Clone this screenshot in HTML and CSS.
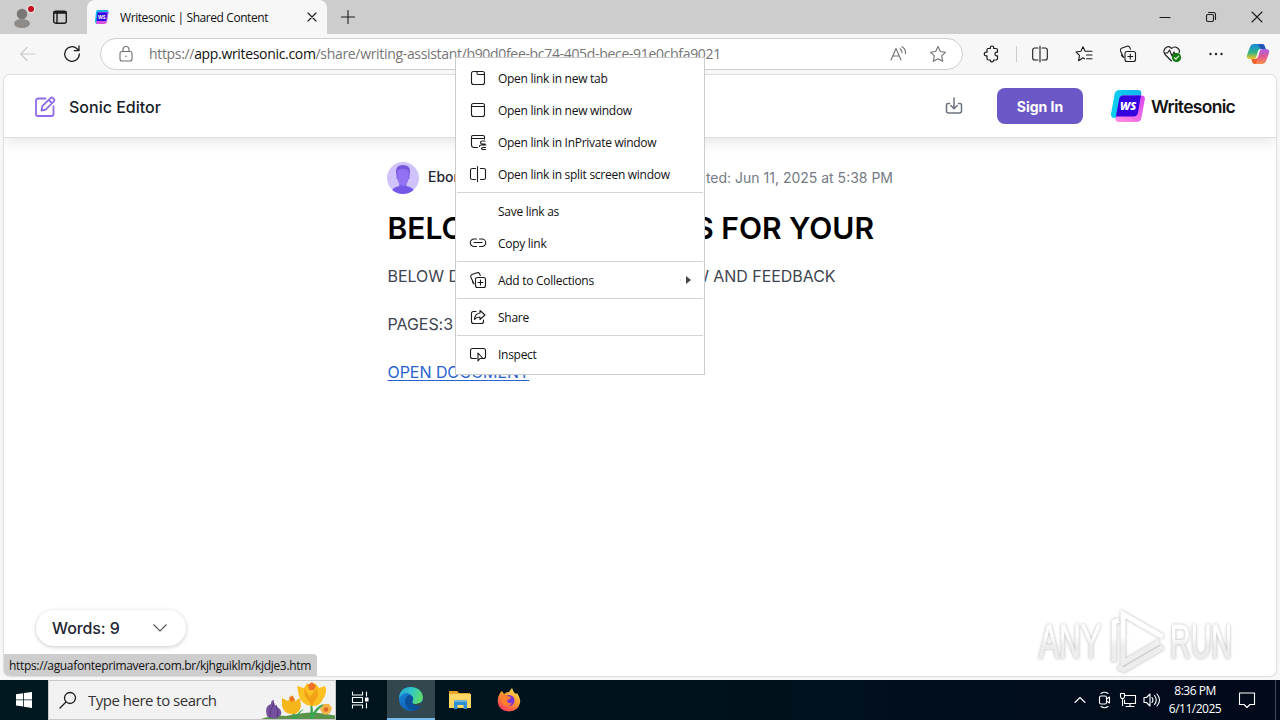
FILE: index.html
```html
<!DOCTYPE html>
<html lang="en">
<head>
<meta charset="utf-8">
<title>Writesonic | Shared Content</title>
<link rel="stylesheet" href="styles.css">
</head>
<body>
<div class="tabstrip">
  <svg class="profile" width="28" height="28" viewBox="0 0 28 28"><circle cx="14" cy="11" r="5.3" fill="#7b7774"/><ellipse cx="14" cy="20.500" rx="8" ry="4.500" fill="#8e8a87"/><circle cx="23" cy="6" r="4.600" fill="#dcdcdc"/><circle cx="23" cy="6" r="3" fill="#c50f1f"/></svg>
  <svg class="tabmenu ico" width="16" height="16" viewBox="0 0 16 16"><rect x="1.700" y="2.200" width="12.600" height="12" rx="2"/><path d="M2 4h12M2 3h12M5 4v10"/></svg>
  <div class="tab">
    <svg width="16" height="16" viewBox="0 0 16 16"><path d="M4 1h9q2 0 1.500 2L13 12q-.5 2-2.500 2H2q-1.500 0-1-2L2 3q.3-2 2-2z" fill="#16b7e8"/><path d="M5 3h9.500l-1.600 9.500q-.5 2.500-2.500 2.500H2z" fill="#d355df"/><path d="M3.500 3.500h10L12 12H2.500z" fill="#2c0be2"/><text x="4" y="9.800" class="wsmini">WS</text></svg>
    <span class="tabtitle">Writesonic | Shared Content</span>
    <svg class="ico" width="12" height="12" viewBox="0 0 12 12"><path d="M2 2l8 8M10 2l-8 8"/></svg>
  </div>
  <svg class="ico plus" width="14" height="14" viewBox="0 0 14 14"><path d="M7 .5v13M.5 7h13"/></svg>
  <div class="wincontrols">
    <svg class="ico" width="12" height="12" viewBox="0 0 12 12"><path d="M1 6.500h10"/></svg>
    <svg class="ico" width="12" height="12" viewBox="0 0 12 12"><rect x="1.500" y="3.500" width="7" height="7" rx="1.500"/><path d="M3.500 1.500h5q2 0 2 2v5"/></svg>
    <svg class="ico" width="12" height="12" viewBox="0 0 12 12"><path d="M1 1l10 10M11 1L1 11"/></svg>
  </div>
</div>

<div class="toolbar">
  <svg class="ico back" width="16" height="16" viewBox="0 0 16 16"><path d="M15 8H1M7 1.500L.8 8 7 14.500"/></svg>
  <svg class="ico reload" width="18" height="18" viewBox="0 0 18 18"><path d="M16.300 9A7.300 7.300 0 1 1 14 3.700L16 5.500M16 1v4.700h-4.700" stroke-width="1.300"/></svg>
  <div class="omnibox">
    <svg class="ico grey" width="14" height="16" viewBox="0 0 14 16"><rect x="1" y="5.500" width="12" height="9.500" rx="2"/><path d="M4 5.500V3.500a3 3 0 0 1 6 0v2"/><circle cx="7" cy="10.300" r=".8" class="dot"/></svg>
    <span class="url">https://<b>app.writesonic.com</b>/share/writing-assistant/b90d0fee-bc74-405d-bece-91e0cbfa9021</span>
    <svg class="ico grey" width="18" height="16" viewBox="0 0 18 16"><path d="M1 14L6 2.500 11 14M2.700 10h6.600M10 2.800q2 1.200 2 4M12 .7q4 2.300 3.500 7"/></svg>
    <svg class="ico grey star" width="18" height="18" viewBox="0 0 18 18"><path d="M9 1.500l2.300 5 5.300.7-3.900 3.700 1 5.400L9 13.700l-4.700 2.600 1-5.400L1.400 7.200l5.300-.7z"/></svg>
  </div>
  <div class="tools">
    <svg class="ico" width="18" height="18" viewBox="0 0 18 18"><path d="M5 3.500h2.300q-.3-2.500 1.700-2.500t1.700 2.500H13q1.500 0 1.500 1.500v2.200q-2.500-.4-2.500 1.800t2.500 1.800v2.700q0 1.500-1.500 1.500h-2.300q0 2-1.700 2t-1.700-2H5.500q-1.500 0-1.500-1.500v-2.700q-2.700.3-2.700-1.800T4 7.200V5q0-1.500 1-1.500z" stroke-width="1.200"/></svg>
    <i class="divider"></i>
    <svg class="ico" width="18" height="18" viewBox="0 0 18 18"><path d="M7 3H4Q1.700 3 1.700 5v8q0 2 2.300 2h3M11 3h3q2.300 0 2.300 2v8q0 2-2.300 2h-3M9 1v16"/></svg>
    <svg class="ico" width="18" height="18" viewBox="0 0 18 18"><path d="M9.500 13.800L8 12.800l-4.400 2.900.9-5.400L1 7l4.900-.7L8 1.700l2.100 4.600H17M11.500 10h5.500M11.500 13.800h5.500"/></svg>
    <svg class="ico" width="18" height="18" viewBox="0 0 18 18"><rect x="6" y="6.500" width="10.500" height="10" rx="2"/><path d="M11.300 9v5M8.800 11.500h5M4.500 12.500L1.500 6Q1 4 2.500 3.300L8 1.300q2-.6 3 1.500l.5 1.500M5 12q-2 0-2.500-2"/></svg>
    <svg class="ico" width="18" height="18" viewBox="0 0 18 18"><path d="M8.500 16L2 9.500Q-.5 6 2.500 3t6 .5Q11.500.8 14.500 3t1.500 5M1.500 8h3l2-3L9 11l2-4 1 2h2.500"/><circle cx="13.500" cy="12.500" r="4.600" fill="#107c10" stroke="none"/><path d="M11.300 12.600l1.600 1.500 2.700-3" stroke="#fff"/></svg>
    <svg class="dots" width="18" height="18" viewBox="0 0 18 18"><circle cx="3.500" cy="9" r="1.200"/><circle cx="9" cy="9" r="1.200"/><circle cx="14.500" cy="9" r="1.200"/></svg>
  </div>
  <svg class="copilot" width="24" height="22" viewBox="0 0 24 22"><defs><linearGradient id="cp1" x1="0" y1="0" x2="0" y2="1"><stop offset="0" stop-color="#1687e0"/><stop offset=".55" stop-color="#2fb48a"/><stop offset="1" stop-color="#f2c320"/></linearGradient><linearGradient id="cp2" x1="0" y1="0" x2="0" y2="1"><stop offset="0" stop-color="#a763e8"/><stop offset=".5" stop-color="#e05795"/><stop offset="1" stop-color="#fb9148"/></linearGradient></defs><path d="M8 1h8q2 0 2.700 2l.9 3h-5q-2 0-2.600 2l-1.700 6q-.6 2-2.500 2H4Q0 16 1 12L4 4Q5 1 8 1z" fill="url(#cp1)"/><path d="M16 21H9q-2 0-2.700-2L5.500 16h4q2 0 2.600-2l1.700-6q.5-2 2.400-2H20q4 0 3 4l-3 8q-1 3-4 3z" fill="url(#cp2)"/><path d="M12 1h4q2 0 2.700 2l.9 3h-5z" fill="#2455b5"/><path d="M5.500 16h4q2 0 2.600-2l.9-3-3 10H9q-2 0-2.700-2z" fill="#f0622f"/></svg>
</div>

<div class="page">
  <header class="appbar">
    <svg class="edit" width="22" height="22" viewBox="0 0 22 22"><path d="M11.500 2.500h-7q-2.500 0-2.500 2V18q0 2 2 2h13.500q2 0 2-2v-7.500"/><path d="M7.500 14.500l.8-4.300L16.800 1.800q1-.8 2 .2l1.200 1.200q1 1 .1 2L11.700 13.600zM14.800 4l3 3"/></svg>
    <span class="appname">Sonic Editor</span>
    <svg class="download" width="18" height="18" viewBox="0 0 18 18"><path d="M4.500 6.500H3q-1.500 0-1.500 1.500v6q0 2 2 2h11q2 0 2-2V8q0-1.500-1.500-1.500h-1.500M9 1v10.500M5.800 8.500L9 11.700l3.200-3.200"/></svg>
    <button class="signin">Sign In</button>
    <div class="brand">
      <svg width="36" height="33" viewBox="0 0 36 33"><defs><linearGradient id="bl" x1="0" y1="0" x2="1" y2="0"><stop offset="0" stop-color="#0bd0ee"/><stop offset="1" stop-color="#12b5ef"/></linearGradient><linearGradient id="pk" x1="0" y1="1" x2="1" y2="0"><stop offset="0" stop-color="#ff8ee0"/><stop offset="1" stop-color="#d945ef"/></linearGradient></defs><path d="M9 0h18q4 0 3.300 4L26.500 24q-.6 4-4.500 4H4q-4.500 0-4-4L3.600 4Q4.500 0 9 0z" fill="url(#bl)"/><path d="M11 5.500h19.500q4 0 3.300 4l-3.400 18.500q-.8 4-4.800 4H8q-4 0-3.500-4z" fill="url(#pk)"/><path d="M12 5.500h18L27 22.500q-.6 4-4.500 4H4.800L8.200 9q.5-3.500 3.800-3.500z" fill="#3404df"/><text x="9" y="19.500" class="wslogo">WS</text></svg>
      <span class="brandname">Writesonic</span>
    </div>
  </header>
  <main class="article">
    <div class="byline">
      <svg width="32" height="32" viewBox="0 0 32 32"><circle cx="16" cy="16" r="16" fill="#d0c3fb"/><path d="M5.300 28q1-2.500 7-4v-3h7v3q6.200 1.500 7.300 4A16 16 0 0 1 5.300 28z" fill="#7658e8"/><path d="M9 9q0-6 7-6t7 6l-.8 8h-1.500Q20 22 16 22.300 12 22 10.500 17H9.800z" fill="#7657dc"/><path d="M10.500 9q1-2 5.500-2t5.500 2v8q-1 6-5.500 7-4.500-1-5.500-7z" fill="#9272f3"/></svg>
      <span class="author">Ebon</span>
      <span class="date">Updated: Jun 11, 2025 at 5:38 PM</span>
    </div>
    <h1><span>BELOW</span><span>S FOR YOUR</span></h1>
    <p class="lead"><span>BELOW DO</span><span>REVIEW AND FEEDBACK</span></p>
    <p>PAGES:3</p>
    <p><a>OPEN DOCUMENT</a></p>
  </main>
  <div class="bottom">
    <div class="words">Words: 9<svg width="16" height="10" viewBox="0 0 16 10"><path d="M1.500 1.500L8 8l6.500-6.500"/></svg></div>
    <svg class="watermark" width="204" height="68" viewBox="0 0 204 68">
      <defs><linearGradient id="wg" gradientUnits="userSpaceOnUse" x1="0" y1="0" x2="0" y2="68"><stop offset=".45" stop-color="#fff"/><stop offset=".6" stop-color="#ededed"/></linearGradient></defs>
      <g class="wm"><text x="6" y="53" textLength="62" lengthAdjust="spacingAndGlyphs">ANY</text><text x="137" y="53" textLength="62" lengthAdjust="spacingAndGlyphs">RUN</text>
      <path d="M126 37L90 58V9L130 32M81 57V17L86 15M85 62L91 65 130 42"/></g>
    </svg>
  </div>
  <div class="status">https://aguafonteprimavera.com.br/kjhguiklm/kjdje3.htm</div>
</div>

<div class="taskbar">
  <div class="start"><svg width="16" height="16" viewBox="0 0 16 16"><path d="M0 2.200L7.200 1.200V7.500H0zM8 1.100L16 0v7.500H8zM0 8.300h7.200v6.300L0 13.600zM8 8.300h8V16L8 14.800z" fill="#fff"/></svg></div>
  <div class="search">
    <svg class="ico" width="18" height="18" viewBox="0 0 18 18"><circle cx="11" cy="7" r="5.500" stroke-width="1.300"/><path d="M7 11l-6 6" stroke-width="1.300"/></svg>
    <span>Type here to search</span>
    <svg class="flowers" width="80" height="38" viewBox="-2 0 80 38"><path d="M0 39q14-6 28-4 25-6 40-2l12 2v5H0z" fill="#5b934d"/><path d="M35 40q0-9-2-15 4 5 4 11 5-7 9-8-8 7-8 12zM52 40q1-15 0-22 3 6 3 14 5-9 13-9-13 8-13 17z" fill="#39a553"/><path d="M9 35q-3-10 4-12 0-4 3-4-1 3 2 6 8 5 4 10-6 5-13 0z" fill="#74519c"/><path d="M16 22q-5 8-4 14M18 24q3 6 1 12" stroke="#54347f" fill="none"/><path d="M24 17l6 3 4-6 3 6 5-3 1 8q-2 9-9 8-8 0-10-8z" fill="#f4b61b"/><path d="M39 5l7 2 3-5 4 3 4-3 4 5 6-2q3 6-2 13-3 8-12 7-9-1-12-10z" fill="#fbc022"/><path d="M46 7l6 9 7-9 1 8-6 10-7-10z" fill="#f2a016"/><path d="M50 4l4-3 4 4-2 4h-5zM31 16l4-1 2 4-4 2z" fill="#ed7228"/><path d="M64 32l-2-4 4-5h5l3 4-2 5-4 2z" fill="#f6b246"/><circle cx="68" cy="28.500" r="2.300" fill="#dd6928"/></svg>
  </div>
  <div class="cell"><svg class="ico light" width="18" height="18" viewBox="0 0 18 18"><path d="M1.500 1v3h10V1M1.500 17v-3h10v3M1.500 6.500h10v5h-10zM15.500 1v4M15.500 12v5"/><rect x="14.500" y="7" width="2.500" height="3" fill="#fff"/></svg></div>
  <div class="cell active"><svg width="26" height="26" viewBox="0 0 26 26"><defs><linearGradient id="ed1" x1="0" y1="0" x2="1" y2=".3"><stop offset="0" stop-color="#219fd6"/><stop offset=".55" stop-color="#32c7c6"/><stop offset="1" stop-color="#5bdc70"/></linearGradient><linearGradient id="ed2" x1="0" y1="0" x2="1" y2="1"><stop offset="0" stop-color="#1b8ce0"/><stop offset="1" stop-color="#0b4c9c"/></linearGradient></defs><circle cx="13" cy="13" r="12" fill="url(#ed2)"/><path d="M1 12Q2 1 13 1q10 0 12 10 0 7-7 7-4 0-4-2 3-4-1-7-6-5-12 3z" fill="url(#ed1)"/><path d="M14 16q3-5-2-7-5 1-5 7 1 7 8 8 5 0 8-4-7 1-9-4z" fill="#0c4f9c"/><path d="M14 16q0 2 4 2 4 0 7-3l-2 5q-7 1-9-4z" fill="#32474e"/></svg></div>
  <div class="cell"><svg width="24" height="20" viewBox="0 0 24 20"><path d="M1 1h8l2 2h11v4H1z" fill="#e7a52a"/><path d="M1 4h22v14H1z" fill="#ffd764"/><path d="M6 10.500h13V19h-3.500v-4h-6v4H6z" fill="#2f8fd5"/><path d="M6 10.500h13V12H6z" fill="#63b2e5"/></svg></div>
  <div class="cell"><svg width="24" height="24" viewBox="0 0 24 24"><defs><linearGradient id="fx" x1=".8" y1="0" x2=".2" y2="1"><stop offset="0" stop-color="#ffe84a"/><stop offset=".5" stop-color="#ff9130"/><stop offset="1" stop-color="#ff3264"/></linearGradient></defs><path d="M3 5l2-2 2 3q2-2 5-2l3-4q1 4 4 6l1-1q4 6 3 10-2 8-11 8.500Q2 23 .7 14 .5 9 3 5z" fill="url(#fx)"/><circle cx="12" cy="12.500" r="5.500" fill="#7b35d4"/><path d="M4 8q4-3 6 0l4 1q-1 3-4 3 0 4 5 3-3 5-8 2-4-3-3-9z" fill="#ff8130"/></svg></div>
  <div class="tray">
    <svg class="ico light" width="12" height="8" viewBox="0 0 12 8"><path d="M1 6.500l5-5 5 5"/></svg>
    <svg class="ico light" width="14" height="18" viewBox="0 0 14 18"><rect x="1.500" y="5" width="7" height="8" rx="1.500"/><path d="M8.500 8l3-2v6l-3-2M3 2.500q3.500-2.500 7 0M3 15.500q3.500 2.500 7 0"/></svg>
    <svg class="ico light" width="18" height="16" viewBox="0 0 18 16"><path d="M6 3.500h10.500v8H5.500V8M1.500 1.500h4V5l-1 1.500h-2L1.500 5zM3.500 6.500v7M11 11.500v3M7 14.500h8"/></svg>
    <svg class="ico light" width="18" height="16" viewBox="0 0 18 16"><path d="M1 5.500h2.500L7 2v12l-3.500-3.500H1zM9 5.500q2 2.500 0 5M11.500 3.500q3.500 4.500 0 9M14 2q5 6 0 12"/></svg>
    <div class="clock"><span>8:36 PM</span><span class="day">6/11/2025</span></div>
    <svg class="ico light" width="18" height="18" viewBox="0 0 18 18"><path d="M1.500 2h15v11.500H12L9 16.500l-3-3H1.500z"/></svg>
  </div>
</div>

<div class="menu">
  <div class="item"><svg class="ico" width="16" height="16" viewBox="0 0 16 16"><rect x="1.500" y="1.500" width="13" height="13" rx="2"/><path d="M7 2v1q0 1.500 1.500 1.500h6"/></svg><span>Open link in new tab</span></div>
  <div class="item"><svg class="ico" width="16" height="16" viewBox="0 0 16 16"><rect x="1.500" y="1.500" width="13" height="13" rx="2"/><path d="M1.500 4.500h13"/></svg><span>Open link in new window</span></div>
  <div class="item"><svg class="ico" width="16" height="16" viewBox="0 0 16 16"><path d="M7.500 13.500H4q-2.500 0-2.500-2.500V3q0-1.500 1.500-1.500h10q1.500 0 1.500 1.500v2M1.500 4.500h13M15 7h-2.500q-2 0-2 1.500t2 1.500H15M9.500 12.500q0-1.500 1.500-1.500h5M15.500 13.500h-2.500q-1.500 0-1.500 1t1.500 1h2.500"/></svg><span>Open link in InPrivate window</span></div>
  <div class="item"><svg class="ico" width="16" height="16" viewBox="0 0 16 16"><path d="M5.500 2.500h-3Q.5 2.500.5 4v8q0 1.500 2 1.500h3M10.500 2.500h3q2 0 2 1.500v8q0 1.500-2 1.500h-3M7.500 .5v15"/></svg><span>Open link in split screen window</span></div>
  <hr>
  <div class="item"><i class="blank"></i><span>Save link as</span></div>
  <div class="item"><svg class="ico" width="16" height="16" viewBox="0 0 16 16"><path d="M6.500 4H4a3.700 3.700 0 0 0 0 7.500h2.500M9.500 4H12a3.700 3.700 0 0 1 0 7.500H9.500M4 7.500h8"/></svg><span>Copy link</span></div>
  <hr>
  <div class="item"><svg class="ico" width="16" height="16" viewBox="0 0 16 16"><rect x="5.500" y="5.500" width="10" height="10" rx="2"/><path d="M10.500 8v5M8 10.500h5M4 12L.8 5Q.3 3.300 2 2.500L7 .8q1.700-.5 2.500 1l.8 1.700M4 12q-1.500-.5-1.500-3"/></svg><span>Add to Collections</span><i class="arrow"></i></div>
  <hr>
  <div class="item"><svg class="ico" width="16" height="16" viewBox="0 0 16 16"><path d="M6 2.500H3.500q-2 0-2 2v8q0 2 2 2h8q2 0 2-2V11M10 1.500L15 6l-5 4.500V8q-3.500 0-5.500 2.500Q5 4.500 10 4z"/></svg><span>Share</span></div>
  <hr>
  <div class="item"><svg class="ico" width="16" height="16" viewBox="0 0 16 16"><path d="M6.500 12.500h-4q-2 0-2-2v-6q0-2 2-2h11q2 0 2 2v6q0 2-2 2M8 7v8l2-2.500h3z"/></svg><span>Inspect</span></div>
</div>
</body>
</html>
```
FILE: styles.css
```css
* { box-sizing: border-box; }
body {
  margin: 0; width: 1280px; height: 720px; overflow: hidden; position: relative;
  display: flex; flex-direction: column; background: #f7f7f7;
  font-family: "Open Sans", "Noto Sans", sans-serif; font-size: 12px; color: #111;
}
svg { flex: none; display: block; overflow: visible; }
span { white-space: nowrap; }
.ico { fill: none; stroke: #1b1b1b; stroke-width: 1.1; stroke-linecap: round; stroke-linejoin: round; }
.grey { stroke: #707070; }
.light { stroke: #fff; }
.dot { fill: #707070; stroke: none; }

.tabstrip { height: 34px; flex: none; background: #cdcdcd; display: flex; align-items: center; padding-left: 8px; }
.tabmenu { margin-left: 16px; stroke-width: 1.4; }
.tab { margin-left: 19px; width: 240px; height: 34px; background: #f7f7f7; border-radius: 8px 8px 0 0; display: flex; align-items: center; padding: 0 9px 0 7px; }
.tabtitle { flex: 1; margin-left: 10px; letter-spacing: -.42px; }
.plus { margin-left: 14px; }
.wincontrols { margin-left: auto; display: flex; gap: 34px; padding-right: 17px; }
.wsmini { font: bold 5px "Open Sans", sans-serif; fill: #fff; }

.toolbar { height: 40px; flex: none; display: flex; align-items: center; padding: 0 10px 0 20px; }
.back { stroke: #c9c9c9; }
.reload { margin-left: 27px; }
.omnibox { margin-left: 19px; width: 863px; height: 32px; border: 1px solid #cfcfcf; border-radius: 16px; background: #fff; display: flex; align-items: center; padding: 0 15px 0 18px; }
.url { margin-left: 16px; flex: 1; font-size: 14px; line-height: 18px; padding-bottom: 1px; color: #757575; letter-spacing: -.325px; }
.url b { font-weight: 400; color: #111; }
.star { margin-left: 21px; }
.tools { margin-left: 20px; display: flex; align-items: center; gap: 26px; }
.divider { width: 1px; height: 16px; background: #ccc; margin: 0 -11px; }
.tools .divider + svg { margin-left: -1px; }
.dots { fill: #222; }
.copilot { margin-left: auto; }

.page { margin: 1px 4px 4px; flex: 1; background: #fff; border-radius: 6px; box-shadow: 0 0 2px rgba(0,0,0,.35); display: flex; flex-direction: column; overflow: hidden; font-family: Inter, sans-serif; }
.appbar { height: 63px; flex: none; display: flex; align-items: center; padding: 0 41px 0 30px; background: #fff; border-bottom: 1px solid #ddd; box-shadow: 0 3px 15px rgba(0,0,0,.11); }
.edit { margin-top: 2px; fill: none; stroke: #8f6ce6; stroke-width: 1.8; stroke-linejoin: round; stroke-linecap: round; }
.appname { margin-left: 13px; padding-top: 2px; font-size: 16px; font-weight: 500; color: #161d29; flex: 1; }
.download { fill: none; stroke: #6b7280; stroke-width: 1.5; stroke-linecap: round; stroke-linejoin: round; }
.signin { margin-left: 34px; width: 86px; height: 36px; border: 0; border-radius: 8px; background: #6b57c6; color: #fff; font: 700 14px Inter, sans-serif; padding: 0; }
.brand { margin-left: 28px; display: flex; align-items: center; width: 124px; }
.brandname { margin-left: 4px; padding-top: 1px; font: 600 17.5px Inter, sans-serif; letter-spacing: -.7px; color: #151515; }
.wslogo { font: italic 800 11px "Open Sans", sans-serif; fill: #fff; }

.article { width: 506px; margin: 24px 0 0 383px; display: flex; flex-direction: column; color: #40444f; font-size: 16px; }
.byline { display: flex; height: 32px; align-items: center; font-size: 14px; }
.author { margin: 0 0 4px 9px; font-weight: 500; color: #1d2330; }
.date { margin: 0 0 1px auto; color: #747b84; font-size: 14px; }
h1 { margin: 16px 0 0 .5px; width: 486.5px; height: 36px; display: flex; justify-content: space-between; font-size: 30px; line-height: 36px; font-weight: 600; color: #000; }
p { margin: 18px 0 6px .5px; line-height: 24px; height: 24px; letter-spacing: -.05px; }
.lead { width: 448px; display: flex; justify-content: space-between; }
a { color: #2a62cf; text-decoration: underline; text-underline-offset: 2px; }

.bottom { margin-top: auto; display: flex; justify-content: space-between; align-items: flex-end; padding: 0 39px 3px 32px; }
.words { width: 150px; height: 36px; margin-bottom: 5px; border-radius: 18px; background: #fff; box-shadow: 0 1px 4px rgba(0,0,0,.22); display: flex; align-items: center; justify-content: space-between; padding: 0 18px 0 16px; font-size: 16px; font-weight: 500; color: #1d2432; letter-spacing: -.1px; }
.words svg { fill: none; stroke: #555; stroke-width: 1.1; }
.watermark { margin-bottom: -22px; filter: drop-shadow(0 0 1.5px rgba(0,0,0,.3)); }
.wm { fill: url(#wg); font: 400 48px "Liberation Sans", sans-serif; stroke: url(#wg); stroke-width: 1; }
.wm path { fill: none; stroke: url(#wg); stroke-width: 5; }
.status { flex: none; width: 313px; height: 22px; background: #cdcdcd; border-radius: 0 4px 0 4px; padding: 1px 0 0 5px; line-height: 22px; font-family: "Open Sans", sans-serif; letter-spacing: -.33px; white-space: nowrap; }

.taskbar { height: 40px; flex: none; display: flex; background: linear-gradient(90deg, #001820, #00131d 50%, #020a1c); }
.start { width: 48px; display: grid; place-items: center; }
.search { width: 288px; background: #f2f2f2; border: 1px solid #c8c8c8; display: flex; align-items: center; padding-left: 10px; font-size: 15px; color: #333; overflow: hidden; }
.search span { margin-left: 11px; letter-spacing: -.5px; flex: 1; }
.flowers { margin-right: -1px; }
.cell { width: 48px; display: grid; place-items: center; margin-right: 1px; }
.active { background: #32474e; border-bottom: 2px solid #76b9ed; margin: 0 1px 0 2px; }
.tray { margin-left: auto; display: flex; align-items: center; padding-right: 19px; margin-right: 4px; border-right: 1px solid #444b58; }
.tray svg:nth-child(1) { margin-right: 12px; }
.tray svg:nth-child(2) { margin-right: 7px; }
.tray svg:nth-child(3) { margin-right: 6px; }
.clock { width: 62px; margin: 0 12px 0 3px; display: flex; flex-direction: column; align-items: center; color: #fff; line-height: 18px; letter-spacing: -.5px; }

.menu { position: absolute; left: 455px; top: 57px; width: 250px; height: 318px; background: #fff; border: 1px solid #ccc; padding: 4px 0; color: #111; }
.item { height: 32px; display: flex; align-items: center; padding-left: 14px; }
.item span { margin-left: 12px; padding-top: 1px; letter-spacing: -.28px; flex: 1; }
.blank { width: 16px; }
.menu hr { margin: 2px 1px; height: 1px; border: 0; background: #d4d4d4; }
.arrow { margin-right: 13px; border: 4px solid transparent; border-left: 5px solid #444; border-right: 0; }
```
